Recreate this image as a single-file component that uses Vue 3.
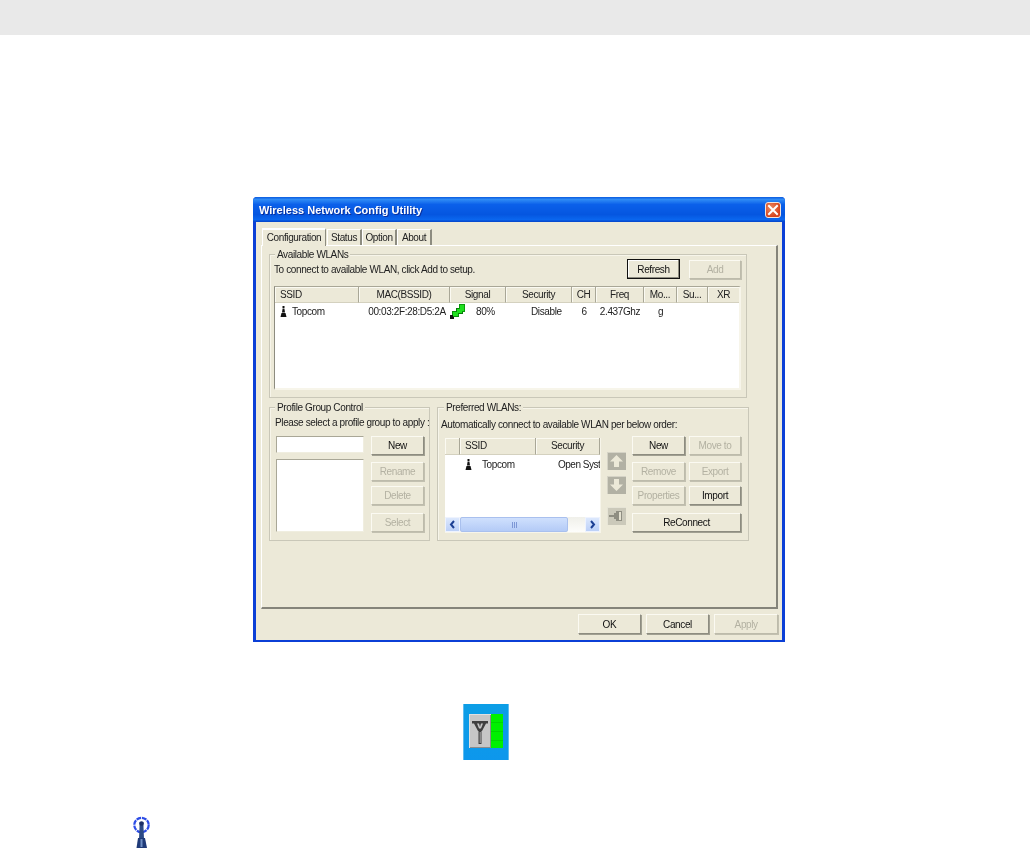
<script setup>
const tabs = ['Status', 'Option', 'About']
const cols = [
  { label: 'SSID', w: 84, left: true },
  { label: 'MAC(BSSID)', w: 91 },
  { label: 'Signal', w: 56 },
  { label: 'Security', w: 66 },
  { label: 'CH', w: 24 },
  { label: 'Freq', w: 48 },
  { label: 'Mo...', w: 33 },
  { label: 'Su...', w: 31 },
  { label: 'XR', w: 32 }
]
const gridCols = cols.map((c) => c.w + 'px').join(' ')
const profileBtns = [
  { t: 'New' },
  { t: 'Rename', off: true },
  { t: 'Delete', off: true },
  { t: 'Select', off: true }
]
const prefBtns = [
  { t: 'New' }, { t: 'Move to', off: true },
  { t: 'Remove', off: true }, { t: 'Export', off: true },
  { t: 'Properties', off: true }, { t: 'Import' },
  { t: 'ReConnect', wide: true }
]
</script>

<template>
  <div class="page">
    <div class="topbar"></div>

    <div class="window">
      <div class="titlebar">
        <span class="title">Wireless Network Config Utility</span>
        <span class="close">
          <svg width="16" height="16" viewBox="0 0 16 16"><path d="M4 4l8 8M12 4l-8 8" stroke="#fff" stroke-width="2" stroke-linecap="square" /></svg>
        </span>
      </div>

      <div class="client">
        <div class="tabrow">
          <span class="tab active">Configuration</span>
          <span v-for="t in tabs" :key="t" class="tab">{{ t }}</span>
        </div>

        <div class="panel">
          <section class="group wlans">
            <span class="legend">Available WLANs</span>
            <div class="toprow">
              <span class="hint">To connect to available WLAN, click Add to setup.</span>
              <button class="btn default refresh">Refresh</button>
              <button class="btn off add">Add</button>
            </div>
            <div class="list biglist">
              <div class="head" :style="{ gridTemplateColumns: gridCols }">
                <span v-for="c in cols" :key="c.label" class="hcell" :class="{ left: c.left }">{{ c.label }}</span>
              </div>
              <div class="row" :style="{ gridTemplateColumns: gridCols }">
                <span class="cell ssid">
                  <svg class="tower" width="7" height="11" viewBox="0 0 7 11"><path d="M2.500 0h2v2h-2zM2.600 2.500h1.800l.6 4H2zM1.500 7h4l1 4H.5z" fill="#111" /></svg>
                  Topcom
                </span>
                <span class="cell mac">00:03:2F:28:D5:2A</span>
                <span class="cell signal">
                  <svg class="sig" width="15" height="15" viewBox="0 0 15 15">
                    <path d="M0 11h4v4H0z" fill="#111" />
                    <path d="M2 7h7v6H2z" fill="#0b8f0b" />
                    <path d="M6 4h7v6H6z" fill="#087a08" />
                    <path d="M9 0h6v8H9z" fill="#0a9a0a" />
                    <path d="M3 8h5v4H3zM7 5h5v4H7zM10 1h4v6h-4z" fill="#1fe01f" />
                    <path d="M0 11h3v3H0z" fill="#111" />
                  </svg>
                  <span class="pct">80%</span>
                </span>
                <span class="cell sec">Disable</span>
                <span class="cell mid">6</span>
                <span class="cell mid">2.437Ghz</span>
                <span class="cell mid">g</span>
                <span class="cell"></span>
                <span class="cell"></span>
              </div>
            </div>
          </section>

          <div class="lower">
            <section class="group profile">
              <span class="legend">Profile Group Control</span>
              <p class="hint">Please select a profile group to apply :</p>
              <div class="profile-body">
                <div class="profile-fields">
                  <div class="input"></div>
                  <div class="listbox"></div>
                </div>
                <div class="stack">
                  <button v-for="b in profileBtns" :key="b.t" class="btn" :class="{ off: b.off }">{{ b.t }}</button>
                </div>
              </div>
            </section>

            <section class="group preferred">
              <span class="legend">Preferred WLANs:</span>
              <p class="hint">Automatically connect to available WLAN per below order:</p>
              <div class="pref-body">
                <div class="list smalllist">
                  <div class="head small-grid">
                    <span class="hcell"></span>
                    <span class="hcell left">SSID</span>
                    <span class="hcell">Security</span>
                  </div>
                  <div class="row small-grid grow">
                    <span class="cell"></span>
                    <span class="cell ssid2">
                      <svg class="tower" width="7" height="11" viewBox="0 0 7 11"><path d="M2.500 0h2v2h-2zM2.600 2.500h1.800l.6 4H2zM1.500 7h4l1 4H.5z" fill="#111" /></svg>
                      Topcom
                    </span>
                    <span class="cell clip">Open Syst</span>
                  </div>
                  <div class="scrollbar">
                    <span class="sb-btn">
                      <svg width="7" height="9" viewBox="0 0 7 9"><path d="M5 1L2 4.500 5 8" fill="none" stroke="#1c3f94" stroke-width="2" /></svg>
                    </span>
                    <span class="sb-thumb"><i></i><i></i><i></i></span>
                    <span class="sb-track"></span>
                    <span class="sb-btn">
                      <svg width="7" height="9" viewBox="0 0 7 9"><path d="M2 1l3 3.500L2 8" fill="none" stroke="#1c3f94" stroke-width="2" /></svg>
                    </span>
                  </div>
                </div>

                <div class="arrows">
                  <span class="arrow">
                    <svg width="15" height="14" viewBox="0 0 15 14"><path d="M7.500 1L14 7.500h-4V13H5V7.500H1z" fill="#ece9d8" /></svg>
                  </span>
                  <span class="arrow">
                    <svg width="15" height="14" viewBox="0 0 15 14"><path d="M7.500 13L1 6.500h4V1h5v5.500h4z" fill="#ece9d8" /></svg>
                  </span>
                  <span class="arrow third">
                    <svg width="15" height="12" viewBox="0 0 15 12"><path d="M0 5h5V3h2V1h6v10H7V9H5V7H0z" fill="#8f8e82" /><path d="M10 2h2v8h-2z" fill="#e4e1d0" /></svg>
                  </span>
                </div>

                <div class="stack two">
                  <button v-for="b in prefBtns" :key="b.t" class="btn" :class="{ off: b.off, wide: b.wide }">{{ b.t }}</button>
                </div>
              </div>
            </section>
          </div>
        </div>

        <div class="footer">
          <button class="btn foot">OK</button>
          <button class="btn foot">Cancel</button>
          <button class="btn foot off">Apply</button>
        </div>
      </div>
    </div>

    <div class="tray-icon">
      <div class="tile">
        <svg width="22" height="34" viewBox="0 0 22 34">
          <path d="M3 7h16v2.500h-2l-4 7.500h-.5v13h-3V17H9L5 9.500H3z" fill="#3e3e3e" />
          <path d="M8 9.500h2l1 3.500 1-3.500h2l-2 5h-2z" fill="#c4c4c4" />
          <path d="M10.500 18h1.500v11h-1.500z" fill="#8a8a8a" />
        </svg>
      </div>
      <div class="bars"></div>
    </div>

    <svg class="small-icon" width="18" height="33" viewBox="0 0 18 33">
      <circle cx="8.500" cy="10" r="7.200" fill="none" stroke="#2c4ce6" stroke-width="2.200" stroke-dasharray="4.800 .9" />
      <path d="M6.500 7h4v5l.5 12H6l.5-12z" fill="#2c4a86" />
      <circle cx="8.500" cy="8.500" r="2.200" fill="#1c2f66" />
      <path d="M5 23h7l2 10H3.500z" fill="#1f3a78" />
      <path d="M7.500 24h2v8h-2z" fill="#6f8ec4" />
    </svg>
  </div>
</template>

<style>
body { background: #fff; }
</style>

<style scoped>
.page {
  height: 856px;
  overflow: hidden;
  display: flex;
  flex-direction: column;
  align-items: flex-start;
  font-family: "Liberation Sans", Arial, sans-serif;
  font-size: 10px;
  letter-spacing: -0.38px;
  color: #222;
}
.topbar { align-self: stretch; height: 35px; background: #e9e9e9; flex: none; }

.window {
  margin: 162px 0 0 253px;
  width: 532px;
  height: 445px;
  flex: none;
  display: flex;
  flex-direction: column;
  background: #0b3fd6;
  border-radius: 4px 4px 0 0;
  padding: 0 3px 2px;
  box-sizing: border-box;
  filter: blur(0.35px);
}
.titlebar {
  height: 25px;
  flex: none;
  margin: 0 -3px;
  padding: 0 5px 0 6px;
  display: flex;
  align-items: center;
  justify-content: space-between;
  border-radius: 4px 4px 0 0;
  background: linear-gradient(180deg, #0a5be0 0%, #2f8bf5 10%, #0b60ea 30%, #0556e0 70%, #0a66ee 90%, #0443c8 100%);
}
.title {
  color: #fff;
  font-weight: 700;
  font-size: 11px;
  letter-spacing: 0;
  text-shadow: 1px 1px 0 #0a2f9c;
}
.close {
  width: 16px;
  height: 16px;
  display: block;
  border: 1px solid #f3e3da;
  border-radius: 3px;
  background: radial-gradient(circle at 35% 35%, #ee8a62, #d6431c 70%);
  margin-right: -1px;
  box-sizing: border-box;
}
.close svg { display: block; margin: -1px; }

.client {
  flex: 1;
  background: #ece9d8;
  padding: 6px 4px 0 5px;
  display: flex;
  flex-direction: column;
  min-height: 0;
}
.tabrow { display: flex; height: 17px; padding-left: 1px; align-items: flex-end; position: relative; z-index: 1; }
.tab {
  height: 16px;
  line-height: 15px;
  padding: 0 2px;
  box-sizing: border-box;
  border-top: 1px solid #fff;
  border-left: 1px solid #fff;
  border-right: 2px solid #8d8c80;
  text-align: center;
}
.tab:nth-child(2) { width: 35px; margin-left: 1px; }
.tab:nth-child(3) { width: 35px; }
.tab:nth-child(4) { width: 35px; }
.tab.active {
  width: 64px;
  height: 18px;
  line-height: 15px;
  margin-bottom: -1px;
  border-right: 1px solid #8d8c80;
  border-top: 2px solid #fff;
  background: #ece9d8;
}

.panel {
  height: 364px;
  flex: none;
  box-sizing: border-box;
  border-top: 1px solid #fff;
  border-left: 1px solid #fff;
  border-right: 2px solid #85847a;
  border-bottom: 2px solid #85847a;
  padding: 8px 0 0 7px;
}

.group {
  position: relative;
  border: 1px solid #c9c7b8;
  box-shadow: inset 1px 1px 0 #f7f5ea;
  box-sizing: border-box;
}
.legend {
  position: absolute;
  top: -7px;
  left: 5px;
  padding: 0 2px;
  line-height: 13px;
  background: #ece9d8;
}
.hint { margin: 0; height: 16px; line-height: 17px; white-space: nowrap; }

.wlans { width: 478px; height: 144px; padding: 4px 5px 0 4px; }
.toprow { display: flex; align-items: center; height: 20px; }
.toprow .hint { flex: 1; }
.btn {
  display: block;
  box-sizing: border-box;
  padding: 0;
  margin: 0;
  font: inherit;
  letter-spacing: inherit;
  color: #111;
  background: #ece9d8;
  border: 1px solid;
  border-color: #fbfaf2 #8d8c80 #8d8c80 #fbfaf2;
  box-shadow: 1px 1px 0 #a09f91;
  height: 19px;
  white-space: nowrap;
  overflow: hidden;
}
.btn.off { color: #b3b1a2; border-color: #fbfaf2 #bdbbab #bdbbab #fbfaf2; box-shadow: 1px 1px 0 #c2c0b0; }
.btn.default { border: 1px solid #111; box-shadow: inset -1px -1px 0 #8d8c80, inset 1px 1px 0 #fff; }
.refresh { width: 53px; height: 20px; }
.add { width: 52px; margin-left: 9px; }

.list { background: #fff; box-sizing: border-box; display: flex; flex-direction: column; overflow: hidden; }
.biglist {
  margin-top: 7px;
  height: 104px;
  border-left: 1px solid #8d8c80;
  border-top: 1px solid #a9a797;
  border-right: 2px solid #f7f5ea;
  border-bottom: 2px solid #f7f5ea;
}
.head { display: grid; flex: none; height: 16px; background: #ece9d8; }
.hcell {
  box-sizing: border-box;
  line-height: 15px;
  text-align: center;
  border-right: 1px solid #a9a797;
  border-bottom: 1px solid #d4d1bf;
  box-shadow: inset 1px 1px 0 #fbfaf2;
  overflow: hidden;
  white-space: nowrap;
}
.hcell.left { text-align: left; padding-left: 5px; }
.row { display: grid; height: 16px; align-items: center; }
.cell { white-space: nowrap; display: flex; align-items: center; }
.cell.mid { justify-content: center; }
.ssid { padding-left: 5px; }
.tower { margin-right: 5px; flex: none; }
.mac { justify-content: center; padding-left: 5px; }
.signal { padding-left: 0; }
.pct { margin-left: 11px; }
.sec { padding-left: 25px; }

.lower { display: flex; gap: 7px; margin-top: 9px; }
.profile { width: 161px; height: 134px; padding: 6px 0 0 5px; }
.profile-body { display: flex; gap: 7px; margin-top: 6px; padding-left: 1px; }
.profile-fields { width: 88px; }
.input { height: 17px; background: #fff; border: 1px solid #a9a797; border-right-color: #f0eee0; border-bottom-color: #f0eee0; box-sizing: border-box; }
.listbox { height: 73px; margin-top: 6px; background: #fff; border: 1px solid #a9a797; border-right-color: #f0eee0; border-bottom-color: #f0eee0; box-sizing: border-box; }
.stack {
  display: grid;
  grid-template-columns: 53px;
  grid-template-rows: 19px 26px 24px 27px;
  align-items: end;
}
.stack.two { grid-template-columns: 53px 52px; column-gap: 4px; }
.stack .wide { grid-column: 1 / 3; }

.preferred { width: 312px; height: 134px; padding: 8px 0 0 3px; }
.preferred .legend { left: 6px; }
.pref-body { display: flex; gap: 6px; margin-top: 4px; padding-left: 4px; }
.smalllist {
  width: 156px;
  height: 95px;
  margin-top: 2px;
  border-right: 1px solid #f7f5ea;
  border-bottom: 1px solid #f7f5ea;
}
.small-grid { display: grid; grid-template-columns: 15px 76px 64px; }
.smalllist .head { height: 17px; }
.grow { flex: 1; height: auto; align-items: start; padding-top: 1px; }
.ssid2 { padding-left: 5px; height: 17px; }
.ssid2 .tower { margin-right: 10px; }
.clip { height: 17px; padding-left: 22px; letter-spacing: -0.5px; }
.scrollbar { display: flex; height: 15px; flex: none; background: #f3f3ee; }
.sb-btn {
  width: 15px;
  display: flex;
  align-items: center;
  justify-content: center;
  background: linear-gradient(180deg, #dce8fd, #bcd0f8);
  border: 1px solid #eef3fe;
  box-sizing: border-box;
}
.sb-thumb {
  width: 108px;
  display: flex;
  gap: 1px;
  align-items: center;
  justify-content: center;
  background: linear-gradient(180deg, #cfe0fd, #b4cbf7);
  border: 1px solid #a9c0ee;
  border-radius: 2px;
  box-sizing: border-box;
}
.sb-thumb i { width: 1px; height: 6px; background: #7d97d6; }
.sb-track { flex: 1; background: linear-gradient(180deg, #f0f0ea, #fdfdfb); }
.arrows { width: 19px; padding-top: 16px; display: flex; flex-direction: column; gap: 6px; }
.arrow {
  height: 18px;
  display: flex;
  align-items: center;
  justify-content: center;
  background: #b2b1a4;
  box-shadow: inset 1px 1px 0 #d5d3c6;
}
.arrow.third { margin-top: 7px; background: #cbc9ba; box-shadow: inset 1px 1px 0 #e6e4d6; }

.footer { display: flex; gap: 5px; margin-top: 5px; padding-left: 317px; }
.foot { width: 64px; height: 20px; }
.foot:first-child { width: 63px; }

.tray-icon {
  margin: 62px 0 0 463px;
  width: 46px;
  height: 56px;
  flex: none;
  box-sizing: border-box;
  padding: 10px 5px 12px 5px;
  display: flex;
  background: linear-gradient(180deg, #0c9ee6, #0d97ec);
  border: 1px solid #5fbcf0;
  border-width: 0 1px;
  filter: blur(0.5px);
}
.tile {
  width: 22px;
  height: 34px;
  background: #c6c6c6;
  box-shadow: inset 1px 1px 0 #e0e0e0, inset -1px -1px 0 #8b8b8b;
  display: flex;
  align-items: center;
  justify-content: center;
}
.bars {
  width: 13px;
  height: 34px;
  background: repeating-linear-gradient(180deg, #00f000 0 8px, #00d800 8px 9px);
}
.small-icon { margin: 55px 0 0 133px; flex: none; filter: blur(0.4px); }
</style>
